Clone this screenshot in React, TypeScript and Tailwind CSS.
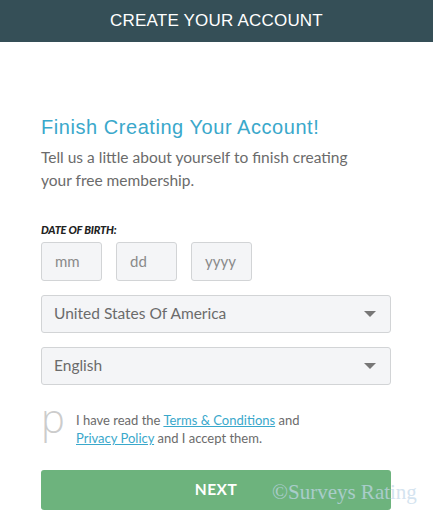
export default function App() {
  const sans = { fontFamily: 'Lato, "Open Sans", sans-serif' };

  return (
    <div className="min-h-screen bg-white" style={sans}>
      <div className="h-[42px] bg-[#354f57] flex items-center justify-center">
        <h1 className="text-white text-[17px] tracking-[0.2px]" style={{ fontFamily: '"Liberation Sans", sans-serif' }}>
          CREATE YOUR ACCOUNT
        </h1>
      </div>

      <div className="px-[41px] pt-[73px]">
        <h2 className="text-[#3aa8cb] text-[20px] leading-[24px] tracking-[0.55px]" style={{ fontFamily: '"Liberation Sans", sans-serif' }}>
          Finish Creating Your Account!
        </h2>
        <p className="mt-[7px] max-w-[325px] text-[#6b6b6b] text-[15.5px] leading-[23px]">
          Tell us a little about yourself to finish creating your free membership.
        </p>

        <div className="mt-[31px] text-[11px] leading-[14px] font-black italic text-[#222] tracking-[-0.2px]">DATE OF BIRTH:</div>
        <div className="mt-[5px] flex gap-[14px]">
          {['mm', 'dd', 'yyyy'].map((p) => (
            <div key={p} className="w-[61px] h-[39px] rounded-[3px] border border-[#d2d4d6] bg-[#f4f5f7] flex items-center pl-[13px] text-[15px] text-[#8a8a8a]">
              {p}
            </div>
          ))}
        </div>

        <div className="mt-[14px] flex flex-col gap-[14px] w-[350px]">
          {['United States Of America', 'English'].map((v) => (
            <div key={v} className="h-[38px] rounded-[3px] border border-[#d2d4d6] bg-[#f4f5f7] flex items-center justify-between pl-[12px] pr-[14px] text-[15.5px] text-[#6b6b6b]">
              <span>{v}</span>
              <span className="w-0 h-0 border-l-[6px] border-r-[6px] border-t-[6px] border-l-transparent border-r-transparent border-t-[#777]" />
            </div>
          ))}
        </div>

        <div className="mt-[26px] flex items-start">
          <span className="w-[35px] text-[40px] leading-[30px] font-light text-[#cccccc] -mt-[8px]" style={{ fontFamily: '"Open Sans", sans-serif' }}>p</span>
          <p className="text-[13px] leading-[18px] text-[#6b6b6b]">
            I have read the <a className="text-[#3aa8cb] underline">Terms &amp; Conditions</a> and
            <br />
            <a className="text-[#3aa8cb] underline">Privacy Policy</a> and I accept them.
          </p>
        </div>

        <div className="relative mt-[23px] w-[350px]">
          <button className="w-full h-[40px] rounded-[3px] bg-[#6db37d] text-white font-bold text-[15.5px] tracking-[0.5px]">
            NEXT
          </button>
          <span className="absolute left-[231px] top-[7px] text-[21px] text-[#c3d8ea] opacity-70 whitespace-nowrap" style={{ fontFamily: '"Liberation Serif", serif' }}>
            ©Surveys Rating
          </span>
        </div>
      </div>
    </div>
  );
}
